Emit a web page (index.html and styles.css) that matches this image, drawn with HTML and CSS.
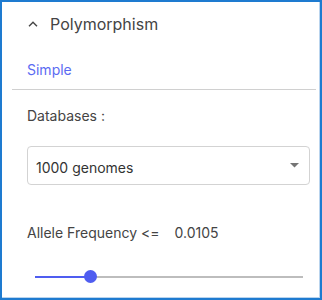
FILE: index.html
```html
<!DOCTYPE html>
<html>
<head>
<meta charset="utf-8">
<link rel="stylesheet" href="styles.css">
</head>
<body>
<div class="panel">
  <div class="header">
    <svg class="caret" width="10" height="6" viewBox="0 0 10 6"><path d="M1 5.2 L5 1.2 L9 5.2" fill="none" stroke="#444" stroke-width="1.4"/></svg>
    <span class="title">Polymorphism</span>
  </div>
  <div class="tab">Simple</div>
  <div class="divider"></div>
  <div class="body">
    <div class="label">Databases :</div>
    <div class="select">
      <span>1000 genomes</span>
      <svg width="9" height="5" viewBox="0 0 9 5"><path d="M0 0 L9 0 L4.5 4.5 Z" fill="#757575"/></svg>
    </div>
    <div class="freq"><span>Allele Frequency &lt;=</span><span class="val">0.0105</span></div>
    <div class="slider">
      <div class="fill"></div>
      <div class="thumb"></div>
    </div>
  </div>
</div>
</body>
</html>
```
FILE: styles.css
```css
html, body { margin: 0; padding: 0; background: #fff; }
body { font-family: Inter, "Noto Sans", sans-serif; color: #444; }
.panel {
  width: 322px; height: 300px; box-sizing: border-box;
  border: 2px solid #1e7bd0;
  box-shadow: inset -1px -1px 0 #b9d4ee;
  display: flex; flex-direction: column;
}
.header { display: flex; align-items: center; height: 40px; padding-top: 2px; padding-left: 26px; }
.caret { margin-right: 12px; margin-top: -1px; }
.title { font-size: 16px; color: #444; }
.tab { color: #5b6bf2; font-size: 14px; padding-left: 25px; margin-top: 16px; height: 20px; line-height: 20px; }
.divider { height: 1px; background: #d0d0d0; margin: 9px 4px 0 10px; }
.body { padding: 0 10px 0 25px; }
.label { font-size: 14px; margin-top: 16px; line-height: 20px; }
.select {
  margin-top: 20px; height: 39px; box-sizing: border-box;
  border: 1px solid #d3d3d3; border-radius: 4px;
  display: flex; align-items: center; justify-content: space-between;
  padding: 0 10px 0 8px; font-size: 14px; color: #333;
}
.select span { margin-top: 3px; }
.freq { font-size: 14px; margin-top: 38px; line-height: 20px; display: flex; }
.val { margin-left: 15px; }
.slider { position: relative; height: 2px; background: #bdbdbd; margin: 33px 7px 0 8px; }
.fill { position: absolute; left: 0; top: 0; height: 2px; width: 56px; background: #4f5df0; }
.thumb { position: absolute; left: 49px; top: -6px; width: 13px; height: 13px; border-radius: 50%; background: #4f5df0; }
```
